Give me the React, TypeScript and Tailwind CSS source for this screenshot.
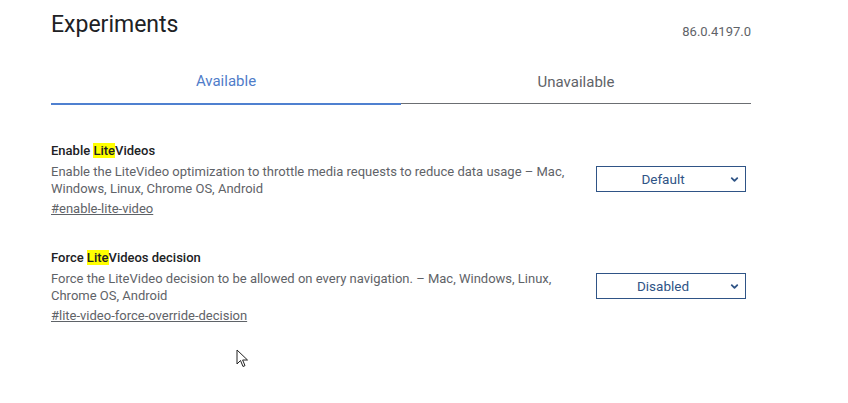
import { ChevronDown } from 'lucide-react';

const experiments = [
  {
    pre: 'Enable ',
    hit: 'Lite',
    post: 'Videos',
    desc: 'Enable the LiteVideo optimization to throttle media requests to reduce data usage – Mac, Windows, Linux, Chrome OS, Android',
    link: '#enable-lite-video',
    value: 'Default',
  },
  {
    pre: 'Force ',
    hit: 'Lite',
    post: 'Videos decision',
    desc: 'Force the LiteVideo decision to be allowed on every navigation. – Mac, Windows, Linux, Chrome OS, Android',
    link: '#lite-video-force-override-decision',
    value: 'Disabled',
  },
];

export default function App() {
  return (
    <div className="relative h-[403px] w-[848px] bg-white font-['Roboto',sans-serif]">
      <div className="ml-[51px] w-[700px]">
        <div className="flex items-end justify-between pt-[11px]">
          <h1 className="text-[23px] leading-[28px] text-[#202124]">Experiments</h1>
          <span className="-mb-[2px] text-[13px] text-[#5f6368]">86.0.4197.0</span>
        </div>

        <div className="mt-[19px] flex">
          <div className="flex h-[47px] w-[350px] items-center justify-center border-b-2 border-[#4f80d0] pt-[2px] text-[15px] text-[#4f7cc9]">
            Available
          </div>
          <div className="flex h-[47px] w-[350px] items-center justify-center pt-[2px] text-[15px] text-[#5f6368]">
            <span>Unavailable</span>
          </div>
        </div>
        <div className="ml-[350px] -mt-[2px] h-px w-[350px] bg-[#6b6e72]" />

        <div className="mt-[38px] flex flex-col gap-[32px]">
          {experiments.map((e) => (
            <div key={e.link} className="flex items-center justify-between">
              <div className="w-[520px] text-[13px] leading-[17px]">
                <h2 className="font-medium text-[#202124]">
                  {e.pre}
                  <mark className="bg-[#ffff00] text-[#202124]">{e.hit}</mark>
                  {e.post}
                </h2>
                <p className="mt-[4px] text-[#5f6368]">{e.desc}</p>
                <a className="mt-[3px] block text-[#5f6368] underline">{e.link}</a>
              </div>
              <div className="mr-[5px] -mt-[1px] flex h-[26px] w-[150px] items-center border border-[#2f5486] pr-[5px] text-[13.5px] text-[#2f5486]">
                <span className="flex-1 text-center">{e.value}</span>
                <ChevronDown size={11} strokeWidth={4} />
              </div>
            </div>
          ))}
        </div>
      </div>

      <svg className="absolute left-[236px] top-[349px]" width="14" height="20" viewBox="0 0 14 20">
        <path d="M1 1 L1 15 L4.5 11.5 L7 17.5 L9 16.6 L6.6 11 L11.5 11 Z" fill="white" stroke="#222" strokeWidth="1" strokeLinejoin="round" />
      </svg>
    </div>
  );
}
